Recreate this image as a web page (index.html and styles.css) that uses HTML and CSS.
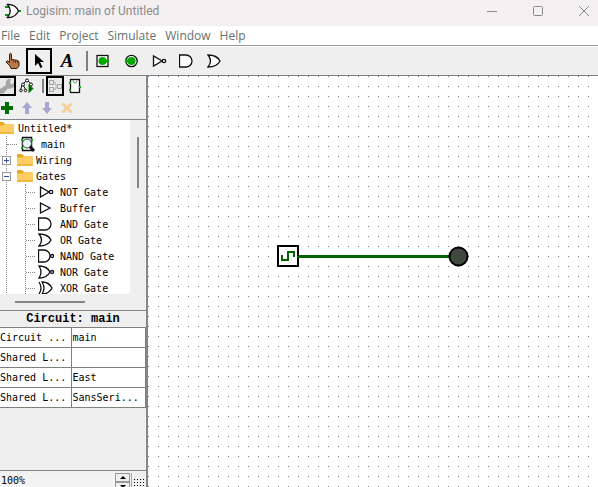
FILE: index.html
```html
<!DOCTYPE html>
<html lang="en">
<head>
<meta charset="utf-8">
<title>Logisim: main of Untitled</title>
<link rel="stylesheet" href="styles.css">
</head>
<body>
<svg class="defs" width="0" height="0" aria-hidden="true">
  <symbol id="folder" viewBox="0 0 16 14"><path d="M0 2q0-1 1-1h4l2 2h8v9H0z" fill="#e8a820"/><path d="M0 4.500h5.500l1.500-1.500h8q1 0 1 1V12q0 1-1 1H1q-1 0-1-1z" fill="#fbcd63"/><path d="M0 11h16v1q0 1-1 1H1q-1 0-1-1z" fill="#f3b93f"/></symbol>
  <symbol id="not" viewBox="0 0 16 16"><path d="M2.500 3v10L11 8z" /><circle cx="13" cy="8" r="1.700"/></symbol>
  <symbol id="buffer" viewBox="0 0 16 16"><path d="M2.500 3v10L12 8z"/></symbol>
  <symbol id="and" viewBox="0 0 16 16"><path d="M.500 2H7a6 6 0 0 1 0 12H.500z"/></symbol>
  <symbol id="or" viewBox="0 0 16 16"><path d="M1 2Q10 2 13 8Q10 14 1 14Q6 8 1 2z"/></symbol>
  <symbol id="nand" viewBox="0 0 16 16"><path d="M.500 2H6a6 6 0 0 1 0 12H.500z"/><circle cx="14" cy="8" r="1.500"/></symbol>
  <symbol id="nor" viewBox="0 0 16 16"><path d="M1 2Q9 2 12 8Q9 14 1 14Q5 8 1 2z"/><circle cx="14" cy="8" r="1.500"/></symbol>
  <symbol id="xor" viewBox="0 0 16 16"><path d="M4 2Q11 2 14 8Q11 14 4 14Q8 8 4 2zM1 2Q5 8 1 14"/></symbol>
</svg>
<div class="window">
  <header class="titlebar">
    <svg width="18" height="16" viewBox="0 0 18 16" fill="none"><path d="M1 4h6M1 12h6M14 8h3" stroke="#00a000" stroke-width="2"/><path d="M3.500 1.500Q11 1 14.500 8Q11 15 3.500 14.500Q9 8 3.500 1.500z" fill="#fff" stroke="#111" stroke-width="1.300"/></svg>
    <h1>Logisim: main of Untitled</h1>
    <div class="controls">
      <button aria-label="Minimize"><svg width="12" height="12" viewBox="0 0 12 12"><path d="M1 6.500h10"/></svg></button>
      <button aria-label="Maximize"><svg width="12" height="12" viewBox="0 0 12 12"><rect x="1.500" y="1.500" width="9" height="9" rx="1"/></svg></button>
      <button aria-label="Close"><svg width="12" height="12" viewBox="0 0 12 12"><path d="M1 1l10 10M11 1L1 11"/></svg></button>
    </div>
  </header>
  <nav class="menubar">
    <button>File</button><button>Edit</button><button>Project</button><button>Simulate</button><button>Window</button><button>Help</button>
  </nav>
  <div class="toolbar">
    <button class="first" aria-label="Poke tool"><svg width="16" height="18" viewBox="0 0 16 18"><path d="M4.500 2q1-1.500 2 0v6l1.500-.500 1.500.500 1.500 0 1 .500 1.500 .500 .500 1v4L12 16.500H6L5 14 1 10q.500-1.500 2-1l1.500 1.500z" fill="#ba7a4c" stroke="#3c2010"/><path d="M8.500 8v2.500M10.500 8.500V11M12.500 9v2" stroke="#5b321a"/></svg></button>
    <button class="chosen" aria-label="Edit tool"><svg width="12" height="18" viewBox="0 0 12 18"><path d="M2 2v12l3-3 2.500 5 2-1-2.500-5h4z" fill="#000"/></svg></button>
    <button class="letter" aria-label="Text tool">A</button>
    <span class="rule"></span>
    <button aria-label="Input pin"><svg width="14" height="14" viewBox="0 0 14 14"><rect x="1" y="1.500" width="11" height="11" fill="#fff" stroke="#111" stroke-width="1.300"/><circle cx="6.500" cy="7" r="4" fill="#00a800"/><path d="M8 7h5" stroke="#00a800" stroke-width="3"/></svg></button>
    <button aria-label="Output pin"><svg width="14" height="14" viewBox="0 0 14 14"><circle cx="7.500" cy="7" r="5.700" fill="#fff" stroke="#111" stroke-width="1.300"/><circle cx="7.500" cy="7" r="4" fill="#00a800"/><path d="M1 7h6" stroke="#00a800" stroke-width="3"/></svg></button>
    <button aria-label="NOT gate"><svg class="gate" width="16" height="16"><use href="#not"/></svg></button>
    <button aria-label="AND gate"><svg class="gate" width="16" height="16"><use href="#and"/></svg></button>
    <button aria-label="OR gate"><svg class="gate" width="16" height="16"><use href="#or"/></svg></button>
  </div>
  <main class="work">
    <aside class="side">
      <div class="views">
        <button class="boxed wrench" aria-label="Show toolbox"><svg width="14" height="16" viewBox="0 0 14 16"><path d="M0 11L6 7Q5 3 8 1l3 0-1 4 2 1.500 2-2v4q-3 3-6 2l-5 5H0z" fill="#a5a5a5"/></svg></button>
        <button class="view" aria-label="Show simulation"><svg width="16" height="16" viewBox="0 0 16 16" fill="none" stroke="#111"><path d="M7 3L3 7L1.500 12M9 3l4 4M4 7l3 5"/><g fill="#fff"><circle cx="8" cy="2.500" r="1.500"/><circle cx="4" cy="6.500" r="1.500"/><circle cx="12" cy="6.500" r="1.500"/><circle cx="2" cy="12.500" r="1.300"/><circle cx="6.500" cy="12.500" r="1.300"/></g><path d="M10 6.500v8l4-4z" fill="#006c00" stroke="#006c00"/></svg></button>
        <span class="rule small"></span>
        <button class="boxed" aria-label="Edit circuit layout"><svg width="14" height="16" viewBox="0 0 14 16" fill="none" stroke="#a0a0a0"><path d="M1.500 2.500h4v4h-4zM1.500 9.500h4v4h-4zM9.500 6.500h4v4h-4z"/><path d="M6 4.500h1.500v3H9M6 11.500h1.500v-2H9" stroke="#a9c5a0"/></svg></button>
        <button class="view" aria-label="Edit circuit appearance"><svg width="14" height="16" viewBox="0 0 14 16"><rect x="2.500" y="1.500" width="9" height="13" fill="#fff" stroke="#111" stroke-width="1.300"/><path d="M5 2q0 3 2 3t2-3" fill="none" stroke="#888"/><path d="M1 5h2M1 12h2M11 9h2" stroke="#00b000" stroke-width="2"/></svg></button>
      </div>
      <div class="edits">
        <button class="first" aria-label="Add circuit"><svg width="12" height="12" viewBox="0 0 12 12"><path d="M4 0h4v4h4v4H8v4H4V8H0V4h4z" fill="#006c00"/></svg></button>
        <button aria-label="Move up"><svg width="10" height="12" viewBox="0 0 10 12"><path d="M5 0l5 6H7v6H3V6H0z" fill="#a7a7d2"/></svg></button>
        <button aria-label="Move down"><svg width="10" height="12" viewBox="0 0 10 12"><path d="M5 12l5-6H7V0H3v6H0z" fill="#a7a7d2"/></svg></button>
        <button aria-label="Remove"><svg width="12" height="12" viewBox="0 0 12 12"><path d="M1.500 1.500l9 9M10.500 1.500l-9 9" stroke="#f4cf96" stroke-width="3"/></svg></button>
      </div>
      <section class="explorer">
        <ul class="tree">
          <li class="root"><svg width="16" height="14"><use href="#folder"/></svg><span>Untitled*</span></li>
          <li class="node leaf"><span class="twig"></span><svg width="16" height="16" viewBox="0 0 16 16"><path d="M2.500 1.500h9v13h-9z" fill="#fff" stroke="#111" stroke-width="1.500"/><path d="M1 4h2M1 12h2M11 4h2" stroke="#00b000" stroke-width="2"/><circle cx="7" cy="7.500" r="4.500" fill="#e3f4f6" stroke="#444"/><path d="M10 10.500l4 4.500" stroke="#111" stroke-width="3"/></svg><span>main</span></li>
          <li class="node"><button class="toggle" aria-label="Expand Wiring"><svg width="7" height="7" viewBox="0 0 7 7"><path d="M1 3.500h5M3.500 1v5"/></svg></button><svg width="16" height="14"><use href="#folder"/></svg><span>Wiring</span></li>
          <li class="node"><button class="toggle" aria-label="Collapse Gates"><svg width="7" height="7" viewBox="0 0 7 7"><path d="M1 3.500h5"/></svg></button><svg width="16" height="14"><use href="#folder"/></svg><span>Gates</span>
            <ul class="gates">
              <li><svg class="gate" width="16" height="16"><use href="#not"/></svg><span>NOT Gate</span></li>
              <li><svg class="gate" width="16" height="16"><use href="#buffer"/></svg><span>Buffer</span></li>
              <li><svg class="gate" width="16" height="16"><use href="#and"/></svg><span>AND Gate</span></li>
              <li><svg class="gate" width="16" height="16"><use href="#or"/></svg><span>OR Gate</span></li>
              <li><svg class="gate" width="16" height="16"><use href="#nand"/></svg><span>NAND Gate</span></li>
              <li><svg class="gate" width="16" height="16"><use href="#nor"/></svg><span>NOR Gate</span></li>
              <li><svg class="gate" width="16" height="16"><use href="#xor"/></svg><span>XOR Gate</span></li>
            </ul>
          </li>
        </ul>
        <div class="vscroll"><span></span></div>
        <div class="hscroll"><span></span></div>
      </section>
      <section class="properties">
        <h2>Circuit: main</h2>
        <table>
          <colgroup><col class="names"><col></colgroup>
          <tr><th scope="row">Circuit ...</th><td>main</td></tr>
          <tr><th scope="row">Shared L...</th><td></td></tr>
          <tr><th scope="row">Shared L...</th><td>East</td></tr>
          <tr><th scope="row">Shared L...</th><td>SansSeri...</td></tr>
        </table>
      </section>
      <div class="zoom">
        <input type="text" value="100%" aria-label="Zoom">
        <div class="steps">
          <button aria-label="Zoom in"><svg width="6" height="3" viewBox="0 0 6 3"><path d="M0 3l3-3 3 3z"/></svg></button>
          <button aria-label="Zoom out"><svg width="6" height="3" viewBox="0 0 6 3"><path d="M0 0l3 3 3-3z"/></svg></button>
        </div>
        <button class="grid" aria-label="Toggle grid"><svg width="11" height="14"><defs><pattern id="mini" width="3" height="3" patternUnits="userSpaceOnUse"><path d="M0 0h1v1H0z"/></pattern></defs><rect width="11" height="14" fill="url(#mini)"/></svg></button>
      </div>
    </aside>
    <div class="canvas">
      <svg width="100%" height="100%" shape-rendering="crispEdges" role="img" aria-label="Clock wired to an output pin">
        <defs><pattern id="dots" width="10" height="10" patternUnits="userSpaceOnUse"><path d="M0 0h1v1H0z" fill="#777"/></pattern></defs>
        <rect width="100%" height="100%" fill="url(#dots)"/>
        <path d="M151 180.500h151" stroke="#006400" stroke-width="3"/>
        <rect x="130" y="170" width="20" height="20" fill="#fff" stroke="#000" stroke-width="2"/>
        <path d="M134 179v5h6v-8h6v5M149 180.500h3" fill="none" stroke="#006400" stroke-width="2"/>
        <circle cx="310.500" cy="180.500" r="9" fill="#404840" stroke="#000" stroke-width="2" shape-rendering="auto"/>
      </svg>
    </div>
  </main>
</div>
</body>
</html>
```
FILE: styles.css
```css
* { box-sizing: border-box; }
body { margin: 0; background: #efefef; font: 12px/16px "Open Sans", sans-serif; color: #000; }
button { margin: 0; padding: 0; border: 0; background: none; font: inherit; color: inherit; }
ul { list-style: none; margin: 0; padding: 0; }
svg { display: block; flex: none; }
.defs { position: absolute; }
.gate { fill: #fff; stroke: #111; stroke-width: 1.3; }
.window { height: 100vh; display: flex; flex-direction: column; overflow: hidden; }

.titlebar { flex: none; height: 26px; padding: 0 0 5px 4px; display: flex; align-items: center; gap: 4px; background: #f3f0f2; color: #8d8b8c; }
.titlebar h1 { margin: 0; font: 400 12px/16px Roboto, sans-serif; }
.controls { margin-left: auto; display: flex; gap: 18px; }
.controls button { width: 28px; height: 20px; display: flex; justify-content: center; align-items: center; }
.controls svg { fill: none; stroke: #8f8a8a; }

.menubar { flex: none; height: 20px; padding-left: 1px; display: flex; gap: 9px; background: #fff; border-bottom: 1px solid #999; color: #65716e; }
.toolbar { flex: none; height: 30px; border-top: 1px solid #fff; border-bottom: 1px solid #7a7e86; display: flex; align-items: center; }
.toolbar button { width: 28px; height: 26px; display: flex; align-items: center; justify-content: center; }
.toolbar .first { width: 25px; }
.toolbar .chosen { width: 26px; margin: 0 1px; border: 2px solid #000; }
.toolbar .letter { font: italic bold 19px/26px "Liberation Serif", serif; }
.rule { width: 2px; height: 20px; margin: 0 1px 0 5px; background: #808080; }

.work { flex: 1; min-height: 0; display: flex; }
.side { width: 148px; flex: none; border-right: 2px solid #80868e; display: flex; flex-direction: column; font: 10px/16px "DejaVu Sans Mono", monospace; }
.canvas { flex: 1; min-width: 0; background: #fff; }

.views { flex: none; height: 21px; display: flex; align-items: flex-start; }
.views button { height: 20px; display: flex; align-items: center; justify-content: center; }
.views .boxed { width: 18px; border: 2px solid #000; background: #e8e8e8; }
.views .wrench { width: 16px; border-left: 0; }
.views .view { width: 22px; }
.rule.small { height: 14px; margin: 3px 2px 0 4px; }
.edits { flex: none; height: 22px; display: flex; align-items: center; }
.edits button { width: 20px; display: flex; justify-content: center; }
.edits .first { width: 17px; padding-right: 3px; }

.explorer { flex: none; height: 191px; border-top: 1px solid #80868e; display: grid; grid-template: 174px 16px / 1fr 16px; }
.tree { background: #fff; overflow: hidden; border-radius: 0 0 3px 0; }
.tree li { white-space: nowrap; }
.tree li > span { line-height: 14px; padding-top: 2px; }
.root, .gates li { display: flex; align-items: center; gap: 4px; height: 16px; }
.root svg { margin-left: -2px; }
.node { display: grid; grid-template: 16px / 14px 16px 1fr; align-items: center; column-gap: 3px; background: repeating-linear-gradient(#888 0 1px, #fff 1px 2px) 6px 0 / 1px 100% no-repeat; }
.leaf { grid-template-columns: 17px 18px 1fr; }
.tree .twig { height: 1px; padding: 0; border-top: 1px dotted #888; margin-left: 7px; }
.toggle { width: 9px; height: 9px; margin-left: 2px; border: 1px solid #999; background: #fff; }
.toggle svg { stroke: #2850a0; fill: none; }
.gates { grid-column: 1 / -1; margin-left: 25px; border-left: 1px dotted #888; }
.gates li { gap: 6px; }
.gates li::before { content: ""; width: 9px; margin-right: -3px; border-top: 1px dotted #888; }
.vscroll { padding: 17px 0 0 7px; }
.vscroll span { display: block; width: 2px; height: 51px; background: #858585; }
.hscroll { grid-column: 1 / -1; padding: 7px 0 0 15px; }
.hscroll span { display: block; width: 70px; height: 2px; background: #858585; }

.properties { flex: 1; min-height: 0; border-top: 1px solid #80868e; border-bottom: 1px solid #80868e; }
.properties h2 { margin: 0; font: bold 12px/16px "Liberation Mono", monospace; text-align: center; }
.properties table { width: 100%; border-collapse: collapse; table-layout: fixed; background: #fff; }
.names { width: 71px; }
.properties th, .properties td { height: 20px; padding: 0 0 0 1px; border: 1px solid #808080; font-weight: 400; text-align: left; line-height: 18px; white-space: nowrap; }
.properties th { border-left: 0; padding: 0; }

.zoom { flex: none; height: 16px; display: flex; padding-top: 2px; overflow: hidden; }
.zoom input { flex: 1; min-width: 0; height: 16px; padding: 0 1px; border: 0; background: #f3f3f3; font: inherit; }
.steps { width: 15px; height: 20px; display: flex; flex-direction: column; }
.steps button { height: 9px; flex: none; border: 1px solid #999; display: flex; align-items: center; justify-content: center; }
.grid { width: 15px; height: 20px; margin-left: 1px; border-left: 1px solid #aaa; display: flex; align-items: flex-end; justify-content: center; }
```
